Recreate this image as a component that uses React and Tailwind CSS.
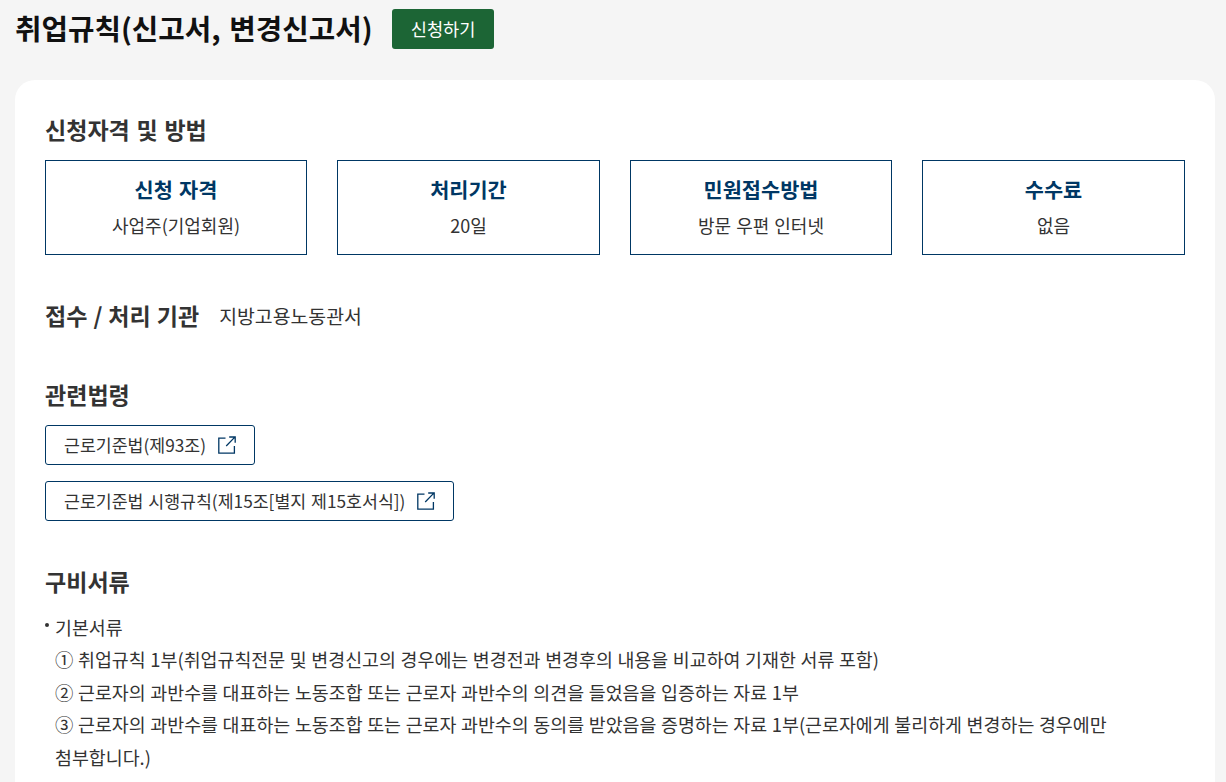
function ExternalIcon() {
  return (
    <svg width="18" height="18" viewBox="0 0 18 18" fill="none" stroke="#003764" strokeWidth="1.3" className="shrink-0">
      <path d="M7.5 2.2H0.8v14.9h15.6V10" />
      <path d="M8.2 10 16.6 1.4M11.2 1h6v5.8" />
    </svg>
  );
}

function InfoBox({ title, value }) {
  return (
    <div className="h-[95px] border border-[#003764] flex flex-col items-center pt-[12px]">
      <div className="text-[20.8px] leading-[32px] font-bold text-[#003764] [word-spacing:1.5px]">{title}</div>
      <div className="mt-[6px] text-[18px] leading-[28px] text-[#333] [word-spacing:1px]">{value}</div>
    </div>
  );
}

function LawLink({ children }) {
  return (
    <a className="inline-flex self-start items-center h-[40px] pl-[18px] pr-[18px] gap-[12px] border border-[#003764] rounded-[3px] bg-white text-[17.28px] text-[#333] [word-spacing:1px]">
      <span>{children}</span>
      <ExternalIcon />
    </a>
  );
}

const heading = "h-[36px] text-[23.04px] leading-[34px] font-bold text-[#333] [word-spacing:1.5px]";

export default function App() {
  return (
    <div className="w-[1226px] h-[782px] overflow-hidden bg-[#f5f5f5] font-['Noto_Sans_CJK_KR','Noto_Sans',sans-serif]">
      <div className="h-[80px] pl-[15px] pt-[9px] flex items-start">
        <h1 className="h-[40px] text-[28.8px] leading-[38px] font-bold text-[#111] [word-spacing:2px]">취업규칙(신고서, 변경신고서)</h1>
        <button className="ml-[19px] h-[40px] w-[102px] pl-[1px] rounded-[3px] bg-[#1c6535] text-white text-[17.6px]">신청하기</button>
      </div>
      <div className="ml-[15px] w-[1200px] h-[760px] rounded-[20px] bg-white px-[30px] pt-[32px]">
        <h2 className={heading}>신청자격 및 방법</h2>
        <div className="mt-[12px] ml-[-0.25px] w-[1140px] grid grid-cols-4 gap-[30px]">
          <InfoBox title="신청 자격" value="사업주(기업회원)" />
          <InfoBox title="처리기간" value="20일" />
          <InfoBox title="민원접수방법" value="방문 우편 인터넷" />
          <InfoBox title="수수료" value="없음" />
        </div>
        <div className="mt-[43px] flex items-center h-[36px]">
          <h2 className="h-[36px] text-[23.04px] leading-[34px] font-bold text-[#333] [word-spacing:0.8px]">접수 / 처리 기관</h2>
          <span className="ml-[20px] text-[19.4px] text-[#333]">지방고용노동관서</span>
        </div>
        <h2 className={`mt-[43px] ${heading}`}>관련법령</h2>
        <div className="mt-[12px] flex flex-col gap-[16px]">
          <LawLink>근로기준법(제93조)</LawLink>
          <LawLink>근로기준법 시행규칙(제15조[별지 제15호서식])</LawLink>
        </div>
        <h2 className={`mt-[43px] ${heading}`}>구비서류</h2>
        <div className="relative mt-[11px] pl-[10px] text-[18.4px] leading-[32.4px] text-[#333] break-keep [word-spacing:0.5px]">
          <span className="absolute left-0 top-[12px] w-[4px] h-[4px] rounded-full bg-[#333]" />
          <p>기본서류</p>
          <p>① 취업규칙 1부(취업규칙전문 및 변경신고의 경우에는 변경전과 변경후의 내용을 비교하여 기재한 서류 포함)</p>
          <p>② 근로자의 과반수를 대표하는 노동조합 또는 근로자 과반수의 의견을 들었음을 입증하는 자료 1부</p>
          <p>③ 근로자의 과반수를 대표하는 노동조합 또는 근로자 과반수의 동의를 받았음을 증명하는 자료 1부(근로자에게 불리하게 변경하는 경우에만 첨부합니다.)</p>
        </div>
      </div>
    </div>
  );
}
